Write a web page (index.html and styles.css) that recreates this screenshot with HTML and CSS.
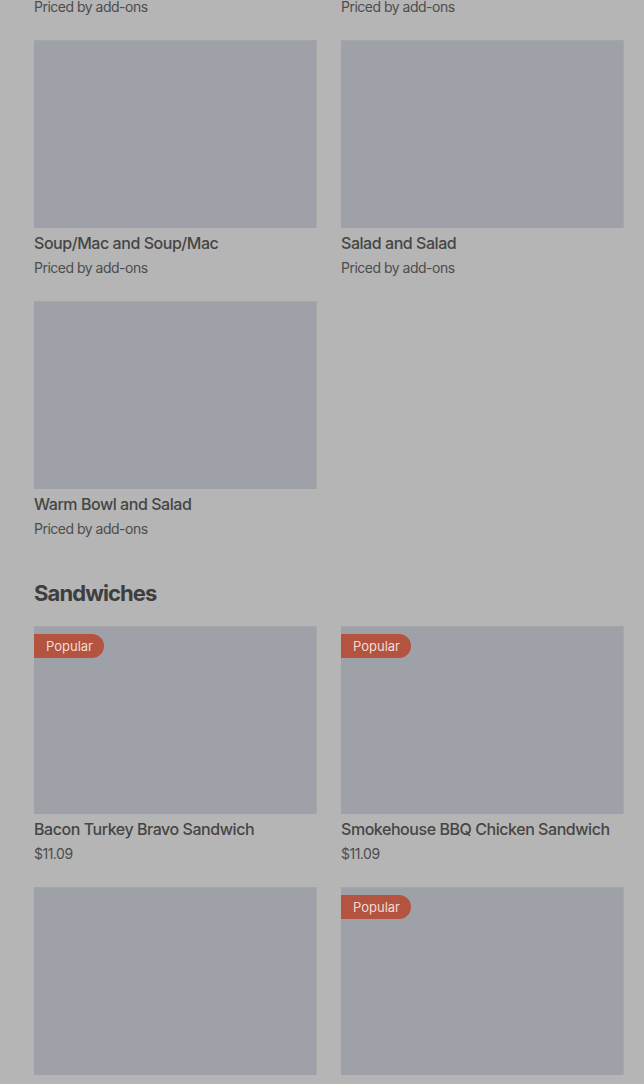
FILE: index.html
```html
<!DOCTYPE html>
<html>
<head>
<meta charset="utf-8">
<link rel="stylesheet" href="styles.css">
</head>
<body>
<main class="page">
  <div class="grid top-row">
    <div class="price">Priced by add-ons</div>
    <div class="price">Priced by add-ons</div>
  </div>
  <div class="grid">
    <div class="card">
      <div class="thumb"></div>
      <div class="title">Soup/Mac and Soup/Mac</div>
      <div class="price">Priced by add-ons</div>
    </div>
    <div class="card">
      <div class="thumb"></div>
      <div class="title">Salad and Salad</div>
      <div class="price">Priced by add-ons</div>
    </div>
    <div class="card">
      <div class="thumb"></div>
      <div class="title">Warm Bowl and Salad</div>
      <div class="price">Priced by add-ons</div>
    </div>
  </div>

  <section class="section">
    <h2 class="heading">Sandwiches</h2>
    <div class="grid">
      <div class="card">
        <div class="thumb"><span class="badge">Popular</span></div>
        <div class="title">Bacon Turkey Bravo Sandwich</div>
        <div class="price">$11.09</div>
      </div>
      <div class="card">
        <div class="thumb"><span class="badge">Popular</span></div>
        <div class="title">Smokehouse BBQ Chicken Sandwich</div>
        <div class="price">$11.09</div>
      </div>
      <div class="card">
        <div class="thumb"></div>
        <div class="title">Toasted Frontega Chicken Sandwich</div>
        <div class="price">$11.09</div>
      </div>
      <div class="card">
        <div class="thumb"><span class="badge">Popular</span></div>
        <div class="title">Chipotle Chicken Avocado Melt</div>
        <div class="price">$11.09</div>
      </div>
    </div>
  </section>
</main>
</body>
</html>
```

FILE: styles.css
```css
html, body {
  margin: 0;
  padding: 0;
  background: #b5b5b5;
  height: 1084px;
  overflow: hidden;
}
body {
  font-family: Inter, "Noto Sans", sans-serif;
  color: #474747;
}
.page {
  padding: 0 20px 0 34px;
}
.grid {
  display: grid;
  grid-template-columns: 283px 283px;
  column-gap: 24px;
  row-gap: 23px;
}
.top-row {
  margin-bottom: 23px;
}
.top-row .price {
  line-height: 14px;
  margin-top: 0;
  height: 17px;
}
.card {
  display: flex;
  flex-direction: column;
}
.thumb {
  position: relative;
  height: 188px;
  background: #9ea1a8;
  box-shadow: inset 0 1px 0 #a4a5a8, inset -1px 0 0 #a8a8a8;
}
.title {
  margin-top: 5px;
  font-size: 16px;
  font-weight: 500;
  line-height: 20px;
  letter-spacing: -0.45px;
  color: #454545;
  white-space: nowrap;
}
.price {
  margin-top: 5px;
  font-size: 14px;
  line-height: 20px;
  letter-spacing: -0.5px;
  color: #4d4d4d;
}
.section {
  margin-top: 40px;
}
.heading {
  margin: 0 0 19px;
  font-size: 22px;
  font-weight: 700;
  line-height: 28px;
  letter-spacing: -0.9px;
  color: #3e3e3e;
}
.badge {
  position: absolute;
  top: 8px;
  left: 0;
  height: 24px;
  line-height: 24px;
  padding: 0 11px 0 12px;
  border-radius: 0 12px 12px 0;
  background: #b4533f;
  color: #f2dcd6;
  font-size: 13px;
  font-weight: 400;
}
```
